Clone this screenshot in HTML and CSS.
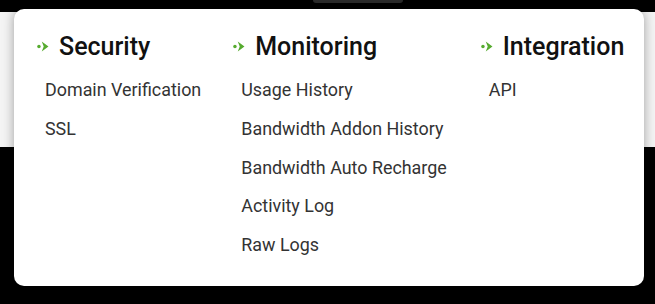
FILE: index.html
```html
<!DOCTYPE html>
<html lang="en">
<head>
  <meta charset="UTF-8">
  <meta name="viewport" content="width=device-width, initial-scale=1.0">
  <title>Menu</title>
  <link rel="stylesheet" href="styles.css">
</head>
<body>
  <div class="topbar">
    <div class="topbar-tab"></div>
  </div>
  <div class="band"></div>

  <div class="menu">
    <div class="menu-col">
      <div class="menu-title">
        <svg class="arrow" viewBox="0 0 12 12" width="13" height="13"><circle cx="1.8" cy="6" r="1.6"/><path d="M4.4 1.4 L10.6 6 L4.4 10.6 L6.2 6 Z"/></svg>
        Security
      </div>
      <a class="menu-item" href="#">Domain Verification</a>
      <a class="menu-item" href="#">SSL</a>
    </div>

    <div class="menu-col menu-col-wide">
      <div class="menu-title">
        <svg class="arrow" viewBox="0 0 12 12" width="13" height="13"><circle cx="1.8" cy="6" r="1.6"/><path d="M4.4 1.4 L10.6 6 L4.4 10.6 L6.2 6 Z"/></svg>
        Monitoring
      </div>
      <a class="menu-item" href="#">Usage History</a>
      <a class="menu-item" href="#">Bandwidth Addon History</a>
      <a class="menu-item" href="#">Bandwidth Auto Recharge</a>
      <a class="menu-item" href="#">Activity Log</a>
      <a class="menu-item" href="#">Raw Logs</a>
    </div>

    <div class="menu-col">
      <div class="menu-title">
        <svg class="arrow" viewBox="0 0 12 12" width="13" height="13"><circle cx="1.8" cy="6" r="1.6"/><path d="M4.4 1.4 L10.6 6 L4.4 10.6 L6.2 6 Z"/></svg>
        Integration
      </div>
      <a class="menu-item" href="#">API</a>
    </div>
  </div>
</body>
</html>
```

FILE: styles.css
```css
body {
  margin: 0;
  background-color: #000;
  font-family: Roboto, 'Liberation Sans', Arial, sans-serif;
  position: relative;
  height: 304px;
  overflow: hidden;
}

.topbar {
  height: 12px;
  background-color: #000;
}

.topbar-tab {
  width: 90px;
  height: 3px;
  margin-left: 313px;
  background-color: #2b2b2b;
  border-radius: 0 0 8px 8px;
}

.band {
  height: 135px;
  background-color: #f4f4f4;
}

/* dropdown panel sits over the header */
.menu {
  position: absolute;
  top: 9px;
  left: 14px;
  width: 630px;
  height: 277px;
  box-sizing: border-box;
  padding: 23px 23px 0 23px;
  background-color: #fff;
  border-radius: 10px;
  box-shadow: 0 0 12px rgba(0, 0, 0, 0.35);
  display: flex;
  gap: 32px;
}

.menu-col {
  display: flex;
  flex-direction: column;
}

.menu-col-wide {
  padding-right: 2px;
}

.menu-title {
  display: flex;
  align-items: center;
  font-size: 25px;
  font-weight: 500;
  color: #111;
  height: 28px;
  margin-bottom: 11px;
}

.arrow {
  fill: #56ab2f;
  margin-right: 9px;
}

.menu-item {
  display: block;
  margin-left: 8px;
  font-size: 17.9px;
  line-height: 38.75px;
  color: #333;
  text-decoration: none;
  white-space: nowrap;
}
```
